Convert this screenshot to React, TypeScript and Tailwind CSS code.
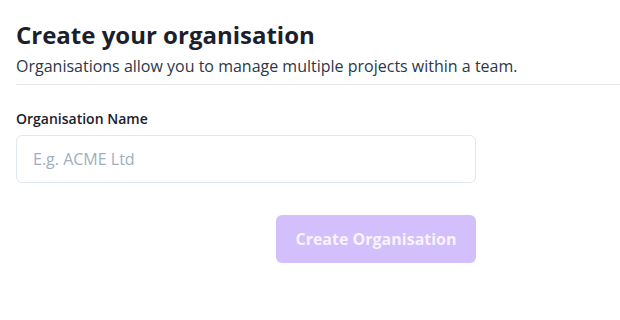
import React from "react";

const App = () => {
  return (
    <div className="w-full min-h-screen bg-white pt-[19px] pl-4 font-['Open_Sans',sans-serif]">
      {/* header */}
      <div className="border-b border-[#e5e7eb] pb-[6px]">
        <h1 className="text-2xl font-bold text-[#1a202c] leading-8">
          Create your organisation
        </h1>
        <p className="mt-[3px] text-base text-[#2d3748] leading-6">
          Organisations allow you to manage multiple projects within a team.
        </p>
      </div>

      {/* form */}
      <div className="w-[460px] mt-6 flex flex-col">
        <label className="text-sm font-semibold text-[#1a202c] leading-5">
          Organisation Name
        </label>
        <input
          className="mt-[6px] h-12 w-full rounded-md border border-[#e2e8f0] px-4 text-base text-[#2d3748] placeholder:text-[#a0aec0] outline-none"
          placeholder="E.g. ACME Ltd"
        />
        <div className="flex justify-end mt-8">
          <button className="w-[200px] h-12 rounded-md bg-[#d3bffb] text-base font-bold text-[#f7f3ff]">
            Create Organisation
          </button>
        </div>
      </div>
    </div>
  );
};

export default App;
